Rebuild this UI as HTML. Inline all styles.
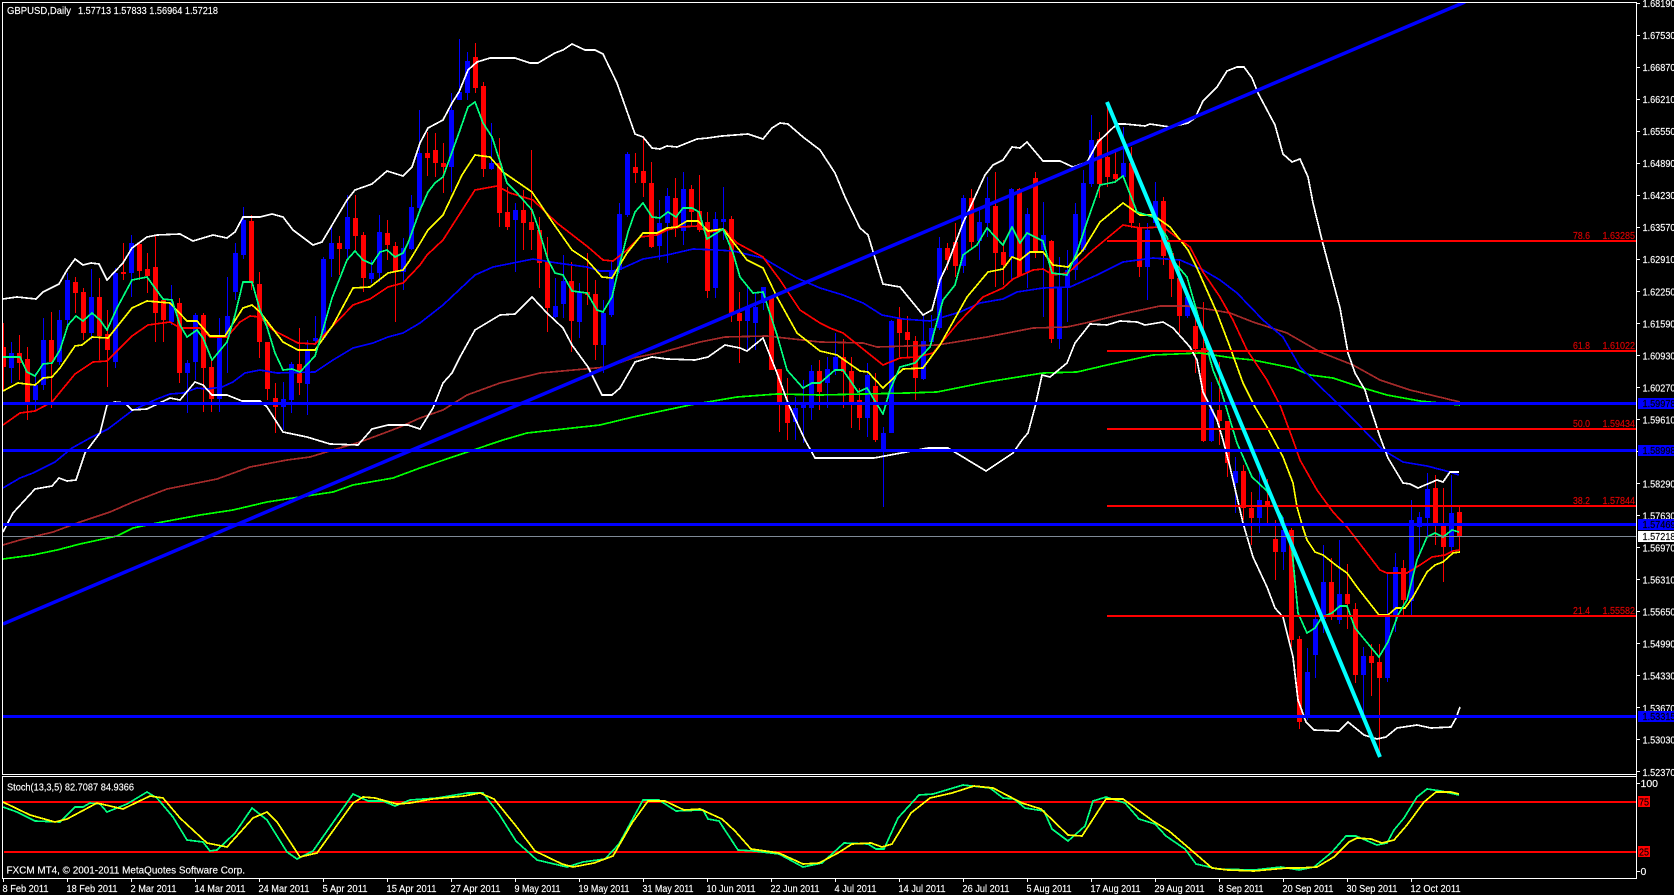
<!DOCTYPE html>
<html><head><meta charset="utf-8"><title>GBPUSD,Daily</title>
<style>
html,body{margin:0;padding:0;background:#000;width:1674px;height:895px;overflow:hidden}
svg{display:block;position:absolute;left:0;top:0}
text{font-family:"Liberation Sans",sans-serif;font-size:10.5px;fill:#fff;stroke:#fff;stroke-width:.15px}
.r{fill:#e00000;stroke:#e00000}.k{fill:#000;stroke:#000}
.l{fill:none;stroke-width:1.7;stroke-linejoin:round;shape-rendering:crispEdges}
</style></head><body>
<svg width="1674" height="895" viewBox="0 0 1674 895" xmlns="http://www.w3.org/2000/svg">
<defs><clipPath id="c"><rect x="3" y="3" width="1633" height="771"/></clipPath></defs>
<rect width="1674" height="895" fill="#000"/>
<g clip-path="url(#c)">
<g fill="none" shape-rendering="crispEdges">
<path stroke="#ff0000" stroke-width="1" d="M3.5 323V390M19.5 335V380M27.5 347V420M51.5 312V408M75.5 277V313M83.5 288V340M99.5 278V360M107.5 310V387M123.5 243V280M139.5 243V280M147.5 253V293M155.5 236V342M163.5 298V342M179.5 298V383M203.5 313V412M211.5 360V412M251.5 215V290M259.5 272V358M267.5 342V400M275.5 383V433M299.5 328V395M339.5 236V275M355.5 195V250M363.5 232V292M387.5 220V260M395.5 242V322M427.5 132V176M435.5 133V177M443.5 143V193M475.5 43V93M483.5 82V177M499.5 138V227M507.5 187V230M523.5 190V250M531.5 150V250M539.5 217V288M547.5 237V332M571.5 262V352M587.5 253V305M595.5 280V360M635.5 153V183M643.5 138V197M651.5 162V248M675.5 178V237M691.5 185V227M699.5 175V232M707.5 212V298M731.5 216V322M739.5 292V363M771.5 297V370M779.5 369V432M787.5 378V440M819.5 360V410M843.5 339V408M851.5 357V428M859.5 388V430M875.5 373V442M899.5 307V357M907.5 316V358M915.5 336V400M947.5 243V270M955.5 223V277M971.5 189V250M995.5 172V287M1003.5 240V285M1019.5 188V277M1035.5 172V258M1051.5 240V343M1099.5 132V198M1107.5 107V187M1115.5 149V183M1131.5 147V228M1139.5 223V277M1163.5 197V265M1171.5 253V297M1179.5 260V333M1195.5 308V373M1203.5 302V442M1219.5 362V445M1227.5 421V477M1243.5 465V520M1251.5 492V545M1267.5 479V523M1275.5 520V580M1291.5 528V647M1299.5 636V729M1331.5 558V620M1347.5 564V629M1355.5 603V683M1371.5 644V696M1379.5 644V752M1403.5 560V615M1435.5 475V545M1443.5 488V582M1459.5 507V552"/>
<path stroke="#ff0000" stroke-width="5" d="M3.5 347V367M19.5 353V363M27.5 359V402M51.5 340V362M75.5 282V293M83.5 292V333M99.5 297V336M107.5 334V350M123.5 272V274M139.5 244V271M147.5 269V276M155.5 267V313M163.5 300V320M179.5 303V373M203.5 315V368M211.5 367V399M251.5 221V283M259.5 284V342M267.5 342V389M275.5 398V407M299.5 364V383M339.5 243V249M355.5 218V236M363.5 235V278M387.5 233V245M395.5 246V272M427.5 153V158M435.5 150V163M443.5 163V167M475.5 57V88M483.5 86V169M499.5 163V213M507.5 212V227M523.5 210V223M531.5 222V230M539.5 230V263M547.5 262V308M571.5 281V321M587.5 292V295M595.5 294V345M635.5 167V173M643.5 171V183M651.5 183V247M675.5 198V227M691.5 189V212M699.5 211V230M707.5 222V291M731.5 219V313M739.5 313V321M771.5 297V370M779.5 369V405M787.5 403V423M819.5 371V392M843.5 357V372M851.5 371V402M859.5 400V418M875.5 386V440M899.5 318V333M907.5 332V340M915.5 341V378M947.5 248V260M955.5 242V266M971.5 198V242M995.5 206V253M1003.5 252V265M1019.5 189V276M1035.5 178V252M1051.5 241V339M1099.5 139V184M1107.5 157V177M1115.5 174V179M1131.5 163V223M1139.5 227V267M1163.5 201V256M1171.5 253V279M1179.5 278V316M1195.5 326V349M1203.5 348V441M1219.5 410V421M1227.5 421V463M1243.5 471V508M1251.5 508V518M1267.5 501V506M1275.5 539V552M1291.5 530V640M1299.5 639V722M1331.5 582V617M1347.5 594V604M1355.5 609V675M1371.5 656V663M1379.5 662V678M1403.5 568V600M1435.5 488V525M1443.5 525V547M1459.5 512V537"/>
<path stroke="#0000ff" stroke-width="1" d="M11.5 342V383M35.5 373V410M43.5 318V390M59.5 310V365M67.5 273V325M91.5 269V340M115.5 268V368M131.5 235V297M171.5 285V325M187.5 360V413M195.5 313V380M219.5 318V412M227.5 277V373M235.5 243V300M243.5 207V259M283.5 382V430M291.5 362V413M307.5 340V415M315.5 316V345M323.5 257V340M331.5 227V277M347.5 195V260M371.5 260V283M379.5 215V282M403.5 238V290M411.5 195V250M419.5 110V210M451.5 93V192M459.5 39V100M467.5 52V100M491.5 123V170M515.5 203V272M555.5 278V318M563.5 255V318M579.5 283V338M603.5 300V373M611.5 260V317M619.5 203V273M627.5 152V217M659.5 200V260M667.5 188V263M683.5 172V245M715.5 212V298M723.5 187V240M747.5 287V350M755.5 293V350M763.5 287V310M795.5 397V440M803.5 380V443M811.5 365V420M827.5 357V408M835.5 333V375M867.5 363V437M883.5 427V507M891.5 320V433M923.5 316V380M931.5 315V345M939.5 237V330M963.5 195V273M979.5 207V260M987.5 177V237M1011.5 188V280M1027.5 208V288M1043.5 202V317M1059.5 257V349M1067.5 250V322M1075.5 203V280M1083.5 170V252M1091.5 115V187M1123.5 127V178M1147.5 223V300M1155.5 182V227M1187.5 293V318M1211.5 382V442M1235.5 457V513M1259.5 473V533M1283.5 517V570M1307.5 648V720M1315.5 610V678M1323.5 545V633M1339.5 540V624M1363.5 647V717M1387.5 573V682M1395.5 553V632M1411.5 500V616M1419.5 512V552M1427.5 473V537M1451.5 475V552"/>
<path stroke="#0000ff" stroke-width="5" d="M11.5 353V368M35.5 385V400M43.5 340V385M59.5 320V362M67.5 280V320M91.5 297V333M115.5 273V362M131.5 243V273M171.5 303V322M187.5 363V373M195.5 315V362M219.5 337V399M227.5 316V337M235.5 253V292M243.5 220V255M283.5 399V407M291.5 364V400M307.5 350V384M315.5 338V341M323.5 259V338M331.5 243V259M347.5 217V249M371.5 273V279M379.5 232V273M403.5 248V272M411.5 207V249M419.5 153V208M451.5 110V167M459.5 92V100M467.5 61V93M491.5 163V169M515.5 210V220M555.5 306V317M563.5 281V304M579.5 292V322M603.5 313V345M611.5 270V315M619.5 214V270M627.5 154V215M659.5 223V246M667.5 196V223M683.5 189V231M715.5 219V288M723.5 219V222M747.5 307V321M755.5 307V323M763.5 287V303M795.5 408V422M803.5 403V408M811.5 371V408M827.5 369V383M835.5 357V370M867.5 375V418M883.5 433V450M891.5 321V433M923.5 341V379M931.5 328V342M939.5 248V328M963.5 198V266M979.5 222V241M987.5 198V223M1011.5 189V257M1027.5 214V272M1043.5 235V250M1059.5 287V339M1067.5 270V288M1075.5 214V270M1083.5 183V250M1091.5 140V184M1123.5 163V177M1147.5 230V267M1155.5 201V223M1187.5 297V316M1211.5 409V441M1235.5 471V483M1259.5 500V518M1283.5 530V552M1307.5 672V717M1315.5 619V655M1323.5 582V619M1339.5 594V620M1363.5 656V675M1387.5 617V678M1395.5 567V617M1411.5 520V601M1419.5 517V527M1427.5 489V518M1451.5 513V547"/>
</g>
<!-- lime EMA -->
<polyline class="l" stroke="#00ff00" points="3,559 33,555 57,550 80,544 117,536 133,528 157,523 200,515 233,510 267,502 293,498 333,492 353,485 393,478 420,468 503,440 527,433 600,425 633,417 690,405 737,397 777,394 820,395 907,393 937,392 987,382 1043,373 1077,372 1107,365 1153,355 1200,353 1233,358 1253,360 1293,368 1310,375 1333,378 1360,387 1387,395 1420,401 1460,405"/>
<!-- brown EMA -->
<polyline class="l" stroke="#a52a2a" points="3,545 20,540 53,532 80,522 110,512 133,502 167,489 187,485 217,479 250,467 287,460 310,457 333,450 360,442 387,432 400,427 420,418 443,410 467,395 500,383 540,373 607,367 633,358 663,352 700,342 725,337 767,336 820,342 863,343 877,347 937,345 987,337 1033,328 1067,327 1090,322 1127,313 1160,306 1187,306 1213,310 1230,313 1253,322 1287,333 1320,352 1353,365 1380,380 1410,390 1460,402"/>
<!-- blue EMA -->
<polyline class="l" stroke="#0000ff" points="3,488 20,478 33,473 55,462 72,448 90,438 108,429 133,410 157,399 170,394 183,393 197,388 207,389 222,387 233,382 245,373 260,370 277,373 315,372 333,360 353,348 373,343 388,337 403,333 420,323 443,305 475,275 493,267 533,259 557,263 587,267 600,271 613,271 623,268 643,259 667,255 693,249 717,250 733,251 763,258 797,278 820,288 843,295 863,303 882,315 903,319 930,321 960,312 980,303 1003,299 1017,292 1043,288 1070,287 1097,275 1123,262 1153,258 1180,260 1203,270 1220,280 1237,293 1263,320 1283,337 1300,367 1335,401 1357,423 1383,450 1403,462 1427,466 1450,472 1459,475"/>
<!-- upper band -->
<polyline class="l" stroke="#ffffff" points="3,299 17,297 36,299 43,292 59,284 67,270 75,259 83,265 91,263 99,264 107,280 123,263 132,248 147,237 157,235 180,234 193,241 213,235 227,238 235,232 243,217 260,217 272,214 283,217 293,230 313,245 322,242 347,200 355,190 372,184 387,171 403,176 412,167 420,143 428,128 443,120 452,103 459,92 468,70 477,62 490,58 515,58 530,63 538,63 555,53 563,50 572,44 585,50 595,50 603,54 617,83 635,134 643,137 652,148 660,149 667,146 677,147 697,139 708,138 722,136 748,134 763,139 772,128 780,123 788,124 803,137 820,150 835,173 845,197 860,228 868,235 883,284 900,287 923,315 932,310 940,280 948,263 963,223 985,175 993,165 1003,160 1012,147 1020,148 1027,142 1043,161 1060,161 1073,167 1087,162 1098,142 1117,124 1125,124 1145,126 1150,124 1170,127 1188,123 1195,118 1203,101 1217,87 1227,71 1237,67 1244,67 1252,78 1258,93 1275,125 1283,154 1292,162 1300,159 1308,177 1313,203 1322,240 1340,308 1348,353 1355,373 1365,390 1368,400 1380,437 1388,458 1403,483 1410,484 1418,488 1437,480 1443,482 1450,472 1459,472"/>
<!-- lower band -->
<polyline class="l" stroke="#ffffff" points="3,532 13,513 35,489 52,486 59,478 67,481 76,480 85,453 100,433 107,405 115,402 125,403 132,410 147,409 170,398 180,400 195,382 203,385 212,395 227,395 242,401 260,401 267,407 283,432 307,437 330,444 358,445 372,429 388,425 408,425 420,429 433,408 443,383 452,373 460,357 475,330 500,315 515,314 532,297 547,313 563,328 572,345 588,367 602,395 612,395 620,388 635,362 652,357 667,359 695,360 708,357 725,345 740,348 747,351 763,338 777,373 788,403 805,440 815,458 874,458 928,448 948,448 986,471 1013,453 1022,440 1028,433 1035,407 1042,375 1050,377 1067,363 1075,343 1090,324 1107,325 1120,321 1137,322 1145,325 1163,322 1173,328 1190,347 1197,360 1203,392 1217,420 1223,440 1230,467 1243,523 1253,557 1267,587 1275,608 1283,617 1293,657 1298,700 1306,722 1314,730 1339,731 1348,722 1364,735 1377,739 1386,737 1397,728 1417,725 1431,728 1451,727 1456,718 1460,707"/>
<!-- red EMA -->
<polyline class="l" stroke="#ff0000" points="3,425 20,413 35,411 52,402 75,374 93,362 107,361 132,336 148,325 170,322 180,328 200,328 210,337 227,337 240,322 250,316 260,317 273,330 298,343 315,344 327,332 353,305 370,299 388,287 403,283 420,265 427,255 443,240 475,190 497,186 510,193 533,200 557,223 588,247 603,260 613,261 627,250 640,237 657,235 667,230 680,227 698,226 707,232 725,230 737,243 763,257 780,280 800,310 820,323 830,328 843,333 883,365 900,358 917,357 933,353 958,323 983,297 1003,288 1013,279 1033,270 1043,269 1053,275 1068,273 1093,250 1123,225 1140,228 1163,227 1190,247 1203,272 1220,297 1233,320 1247,350 1267,380 1280,405 1293,440 1300,460 1317,490 1333,512 1347,527 1357,540 1380,570 1387,573 1407,573 1420,565 1432,557 1445,555 1453,551 1459,550"/>
<!-- yellow EMA -->
<polyline class="l" stroke="#ffff00" points="3,391 18,383 35,385 43,378 52,377 60,368 75,346 82,345 92,337 108,338 132,308 147,301 170,303 187,321 197,321 210,336 225,336 243,308 252,305 260,312 283,342 298,350 315,350 333,325 353,288 370,287 388,273 403,270 410,260 428,230 443,215 462,175 475,155 490,157 503,172 532,192 553,223 572,250 587,260 602,277 612,278 627,253 643,233 657,233 667,228 677,227 687,221 698,221 708,231 723,229 747,260 763,268 777,297 797,333 820,351 837,355 860,371 868,372 883,388 903,369 923,368 940,345 967,297 988,272 1003,269 1012,257 1020,260 1030,252 1043,252 1053,265 1068,267 1083,250 1100,222 1123,203 1140,215 1153,215 1170,227 1188,250 1197,268 1217,313 1230,347 1243,383 1255,407 1267,427 1283,457 1293,483 1297,507 1303,528 1307,540 1315,552 1323,555 1337,566 1347,573 1357,587 1379,615 1388,615 1396,608 1405,608 1413,597 1427,572 1435,565 1443,562 1453,553 1460,552"/>
<!-- green EMA -->
<polyline class="l" stroke="#00ff7f" points="3,357 20,357 27,372 35,376 43,364 52,363 60,350 68,325 76,316 83,321 92,313 100,320 107,330 117,308 132,280 147,277 163,299 172,300 180,325 187,337 197,330 203,338 212,360 227,342 235,315 243,282 252,282 260,310 267,327 275,353 283,370 292,369 300,372 315,356 322,333 332,298 347,260 355,251 363,260 372,264 380,252 387,250 395,257 403,253 408,243 420,210 428,192 435,183 443,177 460,130 468,107 475,102 483,123 492,137 507,183 517,193 532,210 538,227 548,260 555,273 563,275 572,291 587,293 597,310 603,312 612,297 620,263 628,232 635,212 643,203 652,217 660,218 668,212 676,217 683,208 692,208 699,212 707,239 723,229 733,253 740,277 753,293 763,292 777,335 787,370 803,388 812,383 820,383 835,370 843,370 858,392 867,388 883,414 890,390 900,367 915,363 930,347 943,300 955,285 963,255 977,245 987,228 1003,245 1012,227 1020,243 1027,233 1043,241 1052,273 1067,275 1077,252 1087,222 1100,185 1115,182 1123,176 1137,212 1153,217 1167,237 1175,263 1187,277 1203,333 1213,370 1220,387 1237,443 1252,477 1267,491 1282,517 1292,550 1298,613 1307,633 1315,628 1322,617 1332,613 1340,606 1347,606 1355,628 1379,657 1388,642 1398,615 1407,600 1417,560 1427,537 1435,533 1443,537 1452,530 1459,532"/>
<!-- fib lines -->
<g stroke="#ff0000" stroke-width="2" shape-rendering="crispEdges">
<path d="M1107 241H1636M1107 351H1636M1107 429H1636M1107 506H1636M1107 616H1636"/>
</g>
<path d="M3 536.5H1636" stroke="#7f8a96" stroke-width="1" shape-rendering="crispEdges"/>
<path d="M3 403.5H1636M3 450.5H1636M3 524.5H1636M3 716.5H1636" stroke="#0000ff" stroke-width="3" shape-rendering="crispEdges"/>
<path d="M3 624L1465 2" stroke="#0000ff" stroke-width="3.5"/>
<path d="M1107 102L1380 757" stroke="#00ffff" stroke-width="4"/>
</g>

<!-- stochastic -->
<path d="M3 802H1636M4 852H1636" stroke="#ff0000" stroke-width="2" shape-rendering="crispEdges"/>
<polyline class="l" stroke="#00ff7f" points="3,807 17,812 35,821 60,822 75,807 83,807 90,803 100,804 107,812 127,804 147,792 157,798 173,817 187,840 203,842 210,851 217,850 235,833 252,808 267,820 287,852 297,859 313,851 353,794 368,801 383,801 395,806 410,800 437,798 467,793 483,793 499,814 516,841 537,860 567,867 583,862 605,859 619,844 643,800 659,800 676,811 703,810 708,819 719,821 738,850 754,851 779,854 803,867 822,863 844,843 868,844 876,849 884,849 898,818 919,795 933,794 963,785 990,788 1003,798 1014,799 1025,808 1044,811 1052,829 1068,841 1085,826 1093,801 1106,797 1125,803 1139,819 1155,824 1166,836 1185,849 1196,864 1218,869 1254,870 1281,867 1299,870 1314,867 1332,852 1346,836 1356,836 1377,845 1387,843 1394,830 1404,818 1417,797 1427,789 1441,791 1459,795"/>
<polyline class="l" stroke="#ffff00" points="3,802 30,815 55,822 67,819 97,803 123,809 150,796 163,798 180,818 207,843 227,847 253,818 267,812 277,822 300,857 317,853 353,803 363,797 375,798 397,804 410,803 432,799 464,796 480,793 494,799 516,826 535,851 562,864 573,867 594,863 613,856 632,823 648,801 665,801 684,810 700,809 722,819 735,831 751,849 779,853 803,864 819,863 838,853 852,844 871,843 882,847 892,844 911,813 930,798 952,793 974,786 993,788 1022,803 1041,809 1068,835 1082,836 1106,799 1123,799 1153,821 1169,831 1190,849 1212,868 1228,870 1254,871 1287,868 1299,868 1317,867 1334,857 1349,842 1357,838 1371,839 1382,843 1394,840 1407,825 1424,802 1436,792 1451,792 1459,794"/>

<!-- frames -->
<path d="M2.5 775V2.5H1636.5V879M3 774.5H1636M2.5 776V878.5H1636.5M3 776.5H1636" fill="none" stroke="#fff" stroke-width="1" shape-rendering="crispEdges"/>
<path stroke="#fff" stroke-width="1" shape-rendering="crispEdges" d="M3.5 879v3M67.5 879v3M131.5 879v3M195.5 879v3M259.5 879v3M323.5 879v3M387.5 879v3M451.5 879v3M515.5 879v3M579.5 879v3M643.5 879v3M707.5 879v3M771.5 879v3M835.5 879v3M899.5 879v3M963.5 879v3M1027.5 879v3M1091.5 879v3M1155.5 879v3M1219.5 879v3M1283.5 879v3M1347.5 879v3M1411.5 879v3M1637 3.5h3M1637 35.5h3M1637 67.5h3M1637 99.5h3M1637 131.5h3M1637 163.5h3M1637 195.5h3M1637 227.5h3M1637 259.5h3M1637 291.5h3M1637 323.5h3M1637 355.5h3M1637 387.5h3M1637 419.5h3M1637 451.5h3M1637 483.5h3M1637 515.5h3M1637 547.5h3M1637 579.5h3M1637 611.5h3M1637 643.5h3M1637 675.5h3M1637 707.5h3M1637 739.5h3M1637 771.5h3M1637 783.5h3M1637 871.5h3"/>

<!-- labels -->
<text x="7" y="14" textLength="64" lengthAdjust="spacingAndGlyphs">GBPUSD,Daily</text>
<text x="78" y="14" textLength="140" lengthAdjust="spacingAndGlyphs">1.57713 1.57833 1.56964 1.57218</text>
<text x="7" y="790.5" textLength="127" lengthAdjust="spacingAndGlyphs">Stoch(13,3,5) 82.7087 84.9366</text>
<text x="6.5" y="873.5" textLength="238.5" lengthAdjust="spacingAndGlyphs">FXCM MT4, © 2001-2011 MetaQuotes Software Corp.</text>

<!-- price axis -->
<g>
<text x="1642.5" y="7" textLength="33" lengthAdjust="spacingAndGlyphs">1.68190</text>
<text x="1642.5" y="39" textLength="33" lengthAdjust="spacingAndGlyphs">1.67530</text>
<text x="1642.5" y="71" textLength="33" lengthAdjust="spacingAndGlyphs">1.66870</text>
<text x="1642.5" y="103" textLength="33" lengthAdjust="spacingAndGlyphs">1.66210</text>
<text x="1642.5" y="135" textLength="33" lengthAdjust="spacingAndGlyphs">1.65550</text>
<text x="1642.5" y="167" textLength="33" lengthAdjust="spacingAndGlyphs">1.64890</text>
<text x="1642.5" y="199" textLength="33" lengthAdjust="spacingAndGlyphs">1.64230</text>
<text x="1642.5" y="231" textLength="33" lengthAdjust="spacingAndGlyphs">1.63570</text>
<text x="1642.5" y="263" textLength="33" lengthAdjust="spacingAndGlyphs">1.62910</text>
<text x="1642.5" y="295.5" textLength="33" lengthAdjust="spacingAndGlyphs">1.62250</text>
<text x="1642.5" y="327.5" textLength="33" lengthAdjust="spacingAndGlyphs">1.61590</text>
<text x="1642.5" y="359.5" textLength="33" lengthAdjust="spacingAndGlyphs">1.60930</text>
<text x="1642.5" y="391.5" textLength="33" lengthAdjust="spacingAndGlyphs">1.60270</text>
<text x="1642.5" y="423.5" textLength="33" lengthAdjust="spacingAndGlyphs">1.59610</text>
<text x="1642.5" y="455.5" textLength="33" lengthAdjust="spacingAndGlyphs">1.58950</text>
<text x="1642.5" y="487.5" textLength="33" lengthAdjust="spacingAndGlyphs">1.58290</text>
<text x="1642.5" y="519.5" textLength="33" lengthAdjust="spacingAndGlyphs">1.57630</text>
<text x="1642.5" y="551.5" textLength="33" lengthAdjust="spacingAndGlyphs">1.56970</text>
<text x="1642.5" y="583.5" textLength="33" lengthAdjust="spacingAndGlyphs">1.56310</text>
<text x="1642.5" y="615.5" textLength="33" lengthAdjust="spacingAndGlyphs">1.55650</text>
<text x="1642.5" y="647.5" textLength="33" lengthAdjust="spacingAndGlyphs">1.54990</text>
<text x="1642.5" y="679.5" textLength="33" lengthAdjust="spacingAndGlyphs">1.54330</text>
<text x="1642.5" y="712" textLength="33" lengthAdjust="spacingAndGlyphs">1.53670</text>
<text x="1642.5" y="743.5" textLength="33" lengthAdjust="spacingAndGlyphs">1.53030</text>
<text x="1642.5" y="776" textLength="33" lengthAdjust="spacingAndGlyphs">1.52370</text>
<text x="1640.5" y="787">100</text>
<text x="1640.5" y="875">0</text>
</g>
<rect x="1638" y="398" width="36" height="11" fill="#0000ff"/><text class="k" x="1642.5" y="407" textLength="33" lengthAdjust="spacingAndGlyphs">1.59978</text>
<rect x="1638" y="445" width="36" height="11" fill="#0000ff"/><text class="k" x="1642.5" y="454" textLength="33" lengthAdjust="spacingAndGlyphs">1.58998</text>
<rect x="1638" y="519" width="36" height="11" fill="#0000ff"/><text class="k" x="1642.5" y="528" textLength="33" lengthAdjust="spacingAndGlyphs">1.57469</text>
<rect x="1638" y="711" width="36" height="11" fill="#0000ff"/><text class="k" x="1642.5" y="720" textLength="33" lengthAdjust="spacingAndGlyphs">1.53315</text>
<rect x="1638" y="531" width="36" height="11" fill="#ffffff"/><text class="k" x="1642.5" y="540" textLength="33" lengthAdjust="spacingAndGlyphs">1.57218</text>
<rect x="1638" y="796" width="12" height="11" fill="#ff0000"/><text class="k" x="1639" y="805.5" textLength="10" lengthAdjust="spacingAndGlyphs">75</text>
<rect x="1638" y="846" width="12" height="11" fill="#ff0000"/><text class="k" x="1639" y="855.5" textLength="10" lengthAdjust="spacingAndGlyphs">25</text>

<!-- fib labels -->
<g>
<text class="r" x="1573" y="239" textLength="17" lengthAdjust="spacingAndGlyphs">78.6</text><text class="r" x="1602.5" y="239" textLength="32.5" lengthAdjust="spacingAndGlyphs">1.63285</text>
<text class="r" x="1573" y="349" textLength="17" lengthAdjust="spacingAndGlyphs">61.8</text><text class="r" x="1602.5" y="349" textLength="32.5" lengthAdjust="spacingAndGlyphs">1.61022</text>
<text class="r" x="1573" y="427" textLength="17" lengthAdjust="spacingAndGlyphs">50.0</text><text class="r" x="1602.5" y="427" textLength="32.5" lengthAdjust="spacingAndGlyphs">1.59434</text>
<text class="r" x="1573" y="504" textLength="17" lengthAdjust="spacingAndGlyphs">38.2</text><text class="r" x="1602.5" y="504" textLength="32.5" lengthAdjust="spacingAndGlyphs">1.57844</text>
<text class="r" x="1573" y="614" textLength="17" lengthAdjust="spacingAndGlyphs">21.4</text><text class="r" x="1602.5" y="614" textLength="32.5" lengthAdjust="spacingAndGlyphs">1.55582</text>
</g>

<!-- date axis -->
<g>
<text x="2.5" y="892" textLength="46" lengthAdjust="spacingAndGlyphs">8 Feb 2011</text>
<text x="66.5" y="892" textLength="51" lengthAdjust="spacingAndGlyphs">18 Feb 2011</text>
<text x="130.5" y="892" textLength="46" lengthAdjust="spacingAndGlyphs">2 Mar 2011</text>
<text x="194.5" y="892" textLength="51" lengthAdjust="spacingAndGlyphs">14 Mar 2011</text>
<text x="258.5" y="892" textLength="51" lengthAdjust="spacingAndGlyphs">24 Mar 2011</text>
<text x="322.5" y="892" textLength="45" lengthAdjust="spacingAndGlyphs">5 Apr 2011</text>
<text x="386.5" y="892" textLength="50" lengthAdjust="spacingAndGlyphs">15 Apr 2011</text>
<text x="450.5" y="892" textLength="50" lengthAdjust="spacingAndGlyphs">27 Apr 2011</text>
<text x="514.5" y="892" textLength="46" lengthAdjust="spacingAndGlyphs">9 May 2011</text>
<text x="578.5" y="892" textLength="51" lengthAdjust="spacingAndGlyphs">19 May 2011</text>
<text x="642.5" y="892" textLength="51" lengthAdjust="spacingAndGlyphs">31 May 2011</text>
<text x="706.5" y="892" textLength="49" lengthAdjust="spacingAndGlyphs">10 Jun 2011</text>
<text x="770.5" y="892" textLength="49" lengthAdjust="spacingAndGlyphs">22 Jun 2011</text>
<text x="834.5" y="892" textLength="42" lengthAdjust="spacingAndGlyphs">4 Jul 2011</text>
<text x="898.5" y="892" textLength="47" lengthAdjust="spacingAndGlyphs">14 Jul 2011</text>
<text x="962.5" y="892" textLength="47" lengthAdjust="spacingAndGlyphs">26 Jul 2011</text>
<text x="1026.5" y="892" textLength="45" lengthAdjust="spacingAndGlyphs">5 Aug 2011</text>
<text x="1090.5" y="892" textLength="50" lengthAdjust="spacingAndGlyphs">17 Aug 2011</text>
<text x="1154.5" y="892" textLength="50" lengthAdjust="spacingAndGlyphs">29 Aug 2011</text>
<text x="1218.5" y="892" textLength="45" lengthAdjust="spacingAndGlyphs">8 Sep 2011</text>
<text x="1282.5" y="892" textLength="51" lengthAdjust="spacingAndGlyphs">20 Sep 2011</text>
<text x="1346.5" y="892" textLength="51" lengthAdjust="spacingAndGlyphs">30 Sep 2011</text>
<text x="1410.5" y="892" textLength="50" lengthAdjust="spacingAndGlyphs">12 Oct 2011</text>
</g>
</svg>
</body></html>
